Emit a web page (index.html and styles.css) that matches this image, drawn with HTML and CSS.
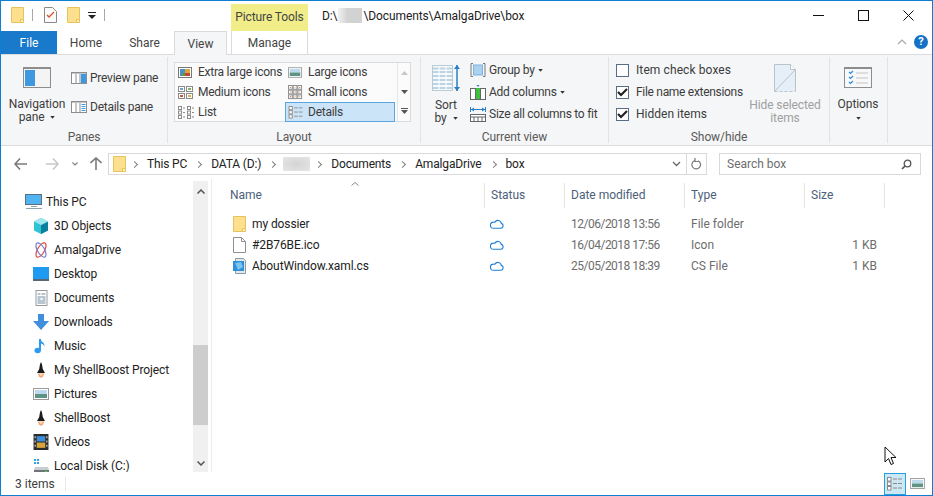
FILE: index.html
```html
<!DOCTYPE html>
<html lang="en">
<head>
  <meta charset="UTF-8">
  <title>box</title>
  <link rel="stylesheet" href="styles.css">
</head>
<body>
  <svg class="defs" width="0" height="0">
    <symbol id="folder" viewBox="0 0 13 16"><path d="M.5.5h12v15H.5z" fill="#fce08e" stroke="#e8c25c"/><path d="M9.500 15.500v-3h3v3z" fill="#fff0bd" stroke="#e8c25c"/></symbol>
    <symbol id="rocket" viewBox="0 0 14 18"><path d="M7 0C5.500 3 5.500 5 5 8L2.500 12.500h9L9 8C8.500 5 8.500 3 7 0z" fill="#1c1c1c"/><path d="M3.500 13h7l-1 3L7 18l-2.500-2z" fill="#f4a878"/><path d="M5.500 13h3l-.5 2.500H6z" fill="#f8d9b8"/></symbol>
    <symbol id="cloud" viewBox="0 0 14 10"><path d="M3.500 9.300h7.200a2.500 2.500 0 0 0 .6-4.900 3.400 3.400 0 0 0-6.400-1.200 2.500 2.500 0 0 0-1.400-.1A3.100 3.100 0 0 0 3.500 9.300z" fill="none" stroke="#1e7fd6" stroke-width="1.100"/></symbol>
    <symbol id="caret" viewBox="0 0 6 4"><path d="M0 0h6L3 3.500z" fill="#333"/></symbol>
    <symbol id="sky" viewBox="0 0 16 12"><rect x=".5" y=".5" width="15" height="11" fill="#fff" stroke="#9a9a9a"/><rect x="2" y="2" width="12" height="4" fill="#bcd9ee"/><rect x="2" y="6" width="12" height="4" fill="#5f9384"/></symbol>
    <symbol id="grid" viewBox="0 0 16 16"><g fill="#fff" stroke="#8a8a8a"><rect x=".5" y=".5" width="4" height="4"/><rect x="5.500" y=".5" width="4" height="4"/><rect x="10.500" y=".5" width="4" height="4"/><rect x=".5" y="5.500" width="4" height="4"/><rect x="5.500" y="5.500" width="4" height="4"/><rect x="10.500" y="5.500" width="4" height="4"/><rect x=".5" y="10.500" width="4" height="4"/><rect x="5.500" y="10.500" width="4" height="4"/><rect x="10.500" y="10.500" width="4" height="4"/></g><path d="M2 2h1v1H2zM12 2h1v1h-1zM7 7h1v1H7zM2 12h1v1H2z" fill="#c0392b"/><path d="M7 2h1v1H7zM12 7h1v1h-1zM2 7h1v1H2zM7 12h1v1H7zM12 12h1v1h-1z" fill="#c89a28"/></symbol>
    <symbol id="details" viewBox="0 0 16 14"><g fill="#fff" stroke="#8a8a8a"><rect x=".5" y=".5" width="3.500" height="3.500"/><rect x=".5" y="5" width="3.500" height="3.500"/><rect x=".5" y="9.500" width="3.500" height="3.500"/></g><path d="M6 2h4M11 2h4M6 6.500h4M11 6.500h4M6 11h4M11 11h4" stroke="#8a8a8a"/></symbol>
  </svg>

  <div class="window">
    <div class="titlebar">
      <div class="qat">
        <svg class="qat-folder" width="13" height="16"><use href="#folder"/></svg>
        <span class="qat-sep"></span>
        <svg class="qat-doc" width="13" height="16" viewBox="0 0 13 16"><path d="M.5.5h8l4 4v11H.5z" fill="#fafafa" stroke="#8a8a8a"/><path d="M3 8l2 2 5-5" fill="none" stroke="#d9532c" stroke-width="1.300"/></svg>
        <svg class="qat-folder2" width="13" height="16"><use href="#folder"/></svg>
        <svg class="qat-drop" width="8" height="7" viewBox="0 0 8 7"><path d="M0 0h8v1H0z" fill="#222"/><path d="M0 3h8L4 7z" fill="#222"/></svg>
        <span class="qat-sep last"></span>
      </div>
      <div class="context-head">Picture Tools</div>
      <div class="title-path">D:\<span class="blur-title"></span>\Documents\AmalgaDrive\box</div>
      <div class="win-buttons">
        <svg width="11" height="11" viewBox="0 0 11 11"><path d="M0 5.500h11" stroke="#111"/></svg>
        <svg width="11" height="11" viewBox="0 0 11 11"><rect x=".5" y=".5" width="10" height="10" fill="none" stroke="#111"/></svg>
        <svg width="11" height="11" viewBox="0 0 11 11"><path d="M.5.5l10 10M10.500.5l-10 10" stroke="#111" fill="none"/></svg>
      </div>
    </div>

    <div class="tabs">
      <div class="tab file">File</div>
      <div class="tab home">Home</div>
      <div class="tab share">Share</div>
      <div class="tab active">View</div>
      <div class="tab manage">Manage</div>
      <svg class="collapse" width="10" height="6" viewBox="0 0 10 6"><path d="M1 5l4-4 4 4" fill="none" stroke="#a8a8a8" stroke-width="1.200"/></svg>
      <div class="help">?</div>
    </div>

    <div class="ribbon">
      <section class="group panes">
        <div class="group-body">
          <div class="big-btn nav-btn">
            <svg class="big-icon" width="28" height="21" viewBox="0 0 28 21"><rect x=".5" y=".5" width="27" height="20" fill="#f4f4f4" stroke="#8d8d8d"/><rect x="0" y="0" width="28" height="2" fill="#8d8d8d"/><rect x="2" y="3" width="10" height="16" fill="#3d98e0"/></svg>
            <span>Navigation</span>
            <span>pane <svg class="caret" width="5" height="3"><use href="#caret"/></svg></span>
          </div>
          <div class="pane-list">
            <div class="pane-item">
              <svg width="16" height="12" viewBox="0 0 16 12"><rect x=".5" y=".5" width="15" height="11" fill="#fff" stroke="#8d8d8d"/><path d="M.5 1h15" stroke="#8d8d8d"/><path d="M5 2v9M9 2v9" stroke="#8d8d8d"/><rect x="10" y="2" width="5" height="9" fill="#3d98e0"/></svg>
              Preview pane
            </div>
            <div class="pane-item">
              <svg width="16" height="12" viewBox="0 0 16 12"><rect x=".5" y=".5" width="15" height="11" fill="#fff" stroke="#8d8d8d"/><path d="M.5 1h15" stroke="#8d8d8d"/><path d="M5 2v9M9 2v9" stroke="#8d8d8d"/><path d="M10.500 3.500h4M10.500 5.500h4M10.500 7.500h4M10.500 9.500h4" stroke="#3d98e0"/></svg>
              Details pane
            </div>
          </div>
        </div>
        <div class="group-label">Panes</div>
      </section>

      <section class="group layout">
        <div class="group-body">
          <div class="gallery">
            <div class="gallery-items">
              <div class="gallery-item"><svg width="14" height="11" viewBox="0 0 14 11"><rect x=".5" y=".5" width="13" height="10" fill="#fff" stroke="#777"/><rect x="2" y="2" width="5" height="7" fill="#4f8fc7"/><rect x="7" y="2" width="5" height="4" fill="#d8a93a"/><rect x="7" y="6" width="5" height="3" fill="#c8452f"/><rect x="4" y="6" width="3" height="3" fill="#5c9a52"/></svg>Extra large icons</div>
              <div class="gallery-item"><svg width="14" height="11"><use href="#sky"/></svg>Large icons</div>
              <div class="gallery-item"><svg width="15" height="13" viewBox="0 0 15 13"><g fill="#fff" stroke="#8a8a8a"><rect x=".5" y=".5" width="6" height="5"/><rect x="8.500" y=".5" width="6" height="5"/><rect x=".5" y="7.500" width="6" height="5"/><rect x="8.500" y="7.500" width="6" height="5"/></g><path d="M2 2h3v2H2z" fill="#6aa5c9"/><path d="M10 2h3v2h-3z" fill="#8aae6a"/><path d="M2 9h3v2H2z" fill="#d2553b"/><path d="M10 9h3v2h-3z" fill="#e0b13c"/></svg>Medium icons</div>
              <div class="gallery-item"><svg width="15" height="15"><use href="#grid"/></svg>Small icons</div>
              <div class="gallery-item"><svg width="16" height="13" viewBox="0 0 16 13"><g fill="#fff" stroke="#8a8a8a"><rect x=".5" y=".5" width="3" height="3"/><rect x=".5" y="5" width="3" height="3"/><rect x=".5" y="9.500" width="3" height="3"/><rect x="9.500" y=".5" width="3" height="3"/><rect x="9.500" y="5" width="3" height="3"/><rect x="9.500" y="9.500" width="3" height="3"/></g><path d="M5 2h2M5 6.500h2M5 11h2M14 2h2M14 6.500h2M14 11h2" stroke="#8a8a8a"/></svg>List</div>
              <div class="gallery-item selected"><svg width="16" height="13"><use href="#details"/></svg>Details</div>
            </div>
            <div class="gallery-scroll">
              <span><svg width="7" height="4" viewBox="0 0 7 4"><path d="M3.500 0L7 4H0z" fill="#c6c6c6"/></svg></span>
              <span><svg width="7" height="4" viewBox="0 0 7 4"><path d="M0 0h7L3.500 4z" fill="#555"/></svg></span>
              <span><svg width="7" height="6" viewBox="0 0 7 6"><path d="M0 0h7v1H0z" fill="#555"/><path d="M0 2h7L3.500 6z" fill="#555"/></svg></span>
            </div>
          </div>
        </div>
        <div class="group-label">Layout</div>
      </section>

      <section class="group current">
        <div class="group-body">
          <div class="big-btn sort-btn">
            <svg class="big-icon sort-icon" width="28" height="28" viewBox="0 0 28 28"><rect x=".5" y="1.500" width="20" height="25" fill="#f6f9fb" stroke="#b7cbd6"/><path d="M1 4.500h19M1 8h19M1 12h19M1 16h19M1 20h19M1 24h19" stroke="#bcd3e2" stroke-width="2"/><path d="M7 2v24M14 2v24" stroke="#fff"/><path d="M25 1v26" stroke="#2a7fc4" stroke-width="1.500"/><path d="M22 5l3-4 3 4zM22 23l3 4 3-4z" fill="#2a7fc4"/></svg>
            <span>Sort</span>
            <span>by <svg class="caret" width="5" height="3"><use href="#caret"/></svg></span>
          </div>
          <div class="view-list">
            <div class="view-item"><svg width="16" height="14" viewBox="0 0 15 14"><path d="M2.500.5h-2v13h2M12.500.5h2v13h-2" fill="none" stroke="#777"/><rect x="3" y="2" width="9" height="10" fill="#a9d1f2" stroke="#7fb2dc"/></svg>Group by <svg class="caret" width="5" height="3"><use href="#caret"/></svg></div>
            <div class="view-item"><svg width="16" height="15" viewBox="0 0 16 15"><rect x=".5" y="3.500" width="15" height="11" fill="#fff" stroke="#666"/><path d="M5.500 4v10M10.500 4v10" stroke="#666"/><rect x="6" y="3" width="4" height="11" fill="#3fc13f"/><path d="M6.500 0h3L8 2z" fill="#2a7fc4"/></svg>Add columns <svg class="caret" width="5" height="3"><use href="#caret"/></svg></div>
            <div class="view-item"><svg width="16" height="15" viewBox="0 0 16 15"><path d="M.5 0v5M15.500 0v5" stroke="#2a7fc4"/><path d="M1 2.500h14" stroke="#2a7fc4"/><path d="M1 2.500l3-2v4zM15 2.500l-3-2v4z" fill="#2a7fc4"/><rect x=".5" y="7.500" width="15" height="7" fill="#fff" stroke="#666"/><path d="M.5 10h15M4 10v5M8 10v5M12 10v5" stroke="#666"/></svg>Size all columns to fit</div>
          </div>
        </div>
        <div class="group-label">Current view</div>
      </section>

      <section class="group showhide">
        <div class="group-body">
          <div class="check-list">
            <div class="check-item wide"><span class="box"></span>Item check boxes</div>
            <div class="check-item tight"><span class="box"><svg width="11" height="9" viewBox="0 0 11 9"><path d="M1 4l3 3 6-6" fill="none" stroke="#222" stroke-width="2.200"/></svg></span>File name extensions</div>
            <div class="check-item"><span class="box"><svg width="11" height="9" viewBox="0 0 11 9"><path d="M1 4l3 3 6-6" fill="none" stroke="#222" stroke-width="2.200"/></svg></span>Hidden items</div>
          </div>
          <div class="big-btn hide-btn">
            <svg class="big-icon hide-icon" width="22" height="28" viewBox="0 0 22 28"><path d="M.5.500h16l5 5v22H.5z" fill="#e6eef8"/><path d="M.5 27.500V.5h16l5 5v22" fill="none" stroke="#b9c3cc"/><path d="M.5 27.500h21" stroke="#b9c3cc" stroke-dasharray="3 2"/><path d="M1 27L21 6" stroke="#b9c3cc"/><path d="M16.500.5v5h5" fill="#fff" stroke="#b9c3cc"/></svg>
            <span>Hide selected</span>
            <span>items</span>
          </div>
        </div>
        <div class="group-label">Show/hide</div>
      </section>

      <section class="group options">
        <div class="group-body">
          <div class="big-btn opt-btn">
            <svg class="big-icon" width="28" height="21" viewBox="0 0 28 21"><rect x=".5" y=".5" width="27" height="20" fill="#f8f8f8" stroke="#8d8d8d"/><rect x="0" y="0" width="28" height="2" fill="#8d8d8d"/><path d="M5 5l1.500 1.500L9 4M5 10l1.500 1.500L9 9M5 15l1.500 1.500L9 14" fill="none" stroke="#2a8fe0" stroke-width="1.200"/><path d="M12 6h12M12 11h12M12 16h12" stroke="#c4c4c4"/></svg>
            <span>Options</span>
            <svg class="caret opt-caret" width="5" height="3"><use href="#caret"/></svg>
          </div>
        </div>
      </section>
    </div>

    <div class="navbar">
      <svg class="nav-arrow back" width="14" height="12" viewBox="0 0 14 12"><path d="M6 .5L1 6l5 5.500M1 6h12" fill="none" stroke="#7a7a7a" stroke-width="1.600"/></svg>
      <svg class="nav-arrow fwd" width="14" height="12" viewBox="0 0 14 12"><path d="M8 .5L13 6l-5 5.500M13 6H1" fill="none" stroke="#c8c8c8" stroke-width="1.600"/></svg>
      <svg class="nav-arrow recent" width="6" height="4" viewBox="0 0 6 4"><path d="M.5.5L3 3 5.500.5" fill="none" stroke="#808080" stroke-width="1.100"/></svg>
      <svg class="nav-arrow up" width="12" height="14" viewBox="0 0 12 14"><path d="M.5 6L6 1l5.500 5M6 1v12" fill="none" stroke="#7a7a7a" stroke-width="1.600"/></svg>
      <div class="address">
        <svg class="addr-folder" width="13" height="16"><use href="#folder"/></svg>
        <span class="crumb">This PC</span>
        <span class="crumb">DATA (D:)</span>
        <span class="crumb"><span class="blur-crumb"></span></span>
        <span class="crumb">Documents</span>
        <span class="crumb">AmalgaDrive</span>
        <span class="crumb">box</span>
        <svg class="addr-drop" width="9" height="6" viewBox="0 0 9 6"><path d="M1 1l3.500 3.500L8 1" fill="none" stroke="#666" stroke-width="1.300"/></svg>
        <span class="addr-refresh"><svg width="11" height="13" viewBox="0 0 11 13"><path d="M4 2.500a4.300 4.300 0 1 0 3 .2M4 0v3.500h3" fill="none" stroke="#777" stroke-width="1.200"/></svg></span>
      </div>
      <div class="search">
        <span>Search box</span>
        <svg width="11" height="11" viewBox="0 0 11 11"><circle cx="6.500" cy="4.500" r="3.300" fill="none" stroke="#555" stroke-width="1.300"/><path d="M4 7L1 10" stroke="#555" stroke-width="1.700"/></svg>
      </div>
    </div>

    <div class="content">
      <div class="tree-pane">
        <div class="tree">
          <div class="tree-row root"><svg width="18" height="16" viewBox="0 0 18 16"><rect x=".5" y=".5" width="16" height="10" fill="#4fb4f0" stroke="#5d6f7c"/><path d="M6 12h6v1H6zM1 14h16v1H1z" fill="#8fa2ae"/></svg>This PC</div>
          <div class="tree-row"><svg width="16" height="16" viewBox="0 0 16 16"><path d="M8 0l7 3.500v9L8 16l-7-3.500v-9z" fill="#2fc3d3"/><path d="M8 7l7-3.500v9L8 16z" fill="#0b7f9e"/><path d="M8 0l7 3.500L8 7 1 3.500z" fill="#9fe6ee"/></svg>3D Objects</div>
          <div class="tree-row"><svg width="16" height="16" viewBox="0 0 16 16"><ellipse cx="8" cy="8" rx="3.500" ry="8" transform="rotate(30 8 8)" fill="none" stroke="#e0463c" stroke-width="1.200"/><ellipse cx="8" cy="8" rx="3.500" ry="8" transform="rotate(-30 8 8)" fill="none" stroke="#6f7fd0" stroke-width="1.200"/></svg>AmalgaDrive</div>
          <div class="tree-row"><svg width="16" height="16" viewBox="0 0 16 16"><rect x="0" y="1" width="16" height="12" fill="#1e9af0"/><rect x="0" y="13" width="16" height="2" fill="#5a6670"/></svg>Desktop</div>
          <div class="tree-row"><svg width="13" height="16" viewBox="0 0 13 16"><rect x="1.500" y=".5" width="11" height="15" fill="#fff" stroke="#9a9a9a"/><path d="M3 4h3M7 4h4M3 7h8M3 9h3M8 9h3M3 11h8M3 13h8" stroke="#6f8ca5"/></svg>Documents</div>
          <div class="tree-row"><svg width="16" height="16" viewBox="0 0 16 16"><path d="M5 0h6v7h5l-8 9-8-9h5z" fill="#3f8fdc"/></svg>Downloads</div>
          <div class="tree-row"><svg width="16" height="16" viewBox="0 0 16 16"><path d="M7 1v11" stroke="#2d9cf0" stroke-width="2"/><ellipse cx="4.700" cy="12.500" rx="3.200" ry="2.800" fill="#2d9cf0"/><path d="M7 1c1 3 5 3 4.500 8C11 6 9 6 7 5z" fill="#2d9cf0"/></svg>Music</div>
          <div class="tree-row"><svg width="14" height="18"><use href="#rocket"/></svg>My ShellBoost Project</div>
          <div class="tree-row"><svg width="16" height="12"><use href="#sky"/></svg>Pictures</div>
          <div class="tree-row"><svg width="14" height="18"><use href="#rocket"/></svg>ShellBoost</div>
          <div class="tree-row"><svg width="14" height="15" viewBox="0 0 14 15"><rect width="14" height="15" fill="#2b2b2b"/><path d="M3 2h8v5H3z" fill="#3d8dd8"/><path d="M3 8h8v5H3z" fill="#d8a53d"/><path d="M1 2h1v2H1zM1 6h1v2H1zM1 10h1v2H1zM12 2h1v2h-1zM12 6h1v2h-1zM12 10h1v2h-1z" fill="#ddd"/></svg>Videos</div>
          <div class="tree-row"><svg width="16" height="16" viewBox="0 0 16 16"><path d="M1 1h2v2H1zM4 1h2v2H4zM1 4h2v2H1zM4 4h2v2H4z" fill="#2fa3e8"/><path d="M2 9h13l1 3H1z" fill="#c5ced3"/><rect x="1" y="12" width="15" height="4" fill="#6e7478"/><rect x="12" y="13" width="2" height="1" fill="#4fd34f"/></svg>Local Disk (C:)</div>
        </div>
        <div class="scrollbar">
          <svg class="sb-arrow" width="8" height="5" viewBox="0 0 8 5"><path d="M.5 4.500L4 1l3.500 3.500" fill="none" stroke="#555" stroke-width="1.500"/></svg>
          <div class="sb-thumb"></div>
          <svg class="sb-arrow bottom" width="8" height="5" viewBox="0 0 8 5"><path d="M.5.5L4 4 7.500.5" fill="none" stroke="#555" stroke-width="1.500"/></svg>
        </div>
      </div>

      <div class="files">
        <div class="file-grid head">
          <div class="col-head name">Name<svg class="sort-arrow" width="8" height="4" viewBox="0 0 8 4"><path d="M.5 3.500L4 .5l3.500 3" fill="none" stroke="#888"/></svg></div>
          <div class="col-head">Status</div>
          <div class="col-head">Date modified</div>
          <div class="col-head">Type</div>
          <div class="col-head">Size</div>
        </div>
        <div class="file-grid row">
          <div class="fname"><svg width="13" height="16"><use href="#folder"/></svg>my dossier</div>
          <div class="status"><svg width="14" height="10"><use href="#cloud"/></svg></div>
          <div class="meta date">12/06/2018 13:56</div>
          <div class="meta">File folder</div>
          <div class="meta size"></div>
        </div>
        <div class="file-grid row">
          <div class="fname"><svg width="13" height="16" viewBox="0 0 13 16"><path d="M.5.5h8l4 4v11H.5z" fill="#fff" stroke="#8f8f8f"/><path d="M8.500.5v4h4" fill="none" stroke="#8f8f8f"/></svg>#2B76BE.ico</div>
          <div class="status"><svg width="14" height="10"><use href="#cloud"/></svg></div>
          <div class="meta date">16/04/2018 17:56</div>
          <div class="meta">Icon</div>
          <div class="meta size">1 KB</div>
        </div>
        <div class="file-grid row">
          <div class="fname"><svg width="13" height="16" viewBox="0 0 13 16"><path d="M2.500.5h8l2 2v13h-10z" fill="#dfe8ef" stroke="#8f9aa3"/><rect x="0" y="3" width="11" height="10" fill="#2f8fd8"/><path d="M2 5l6-1 2 5-5 3z" fill="#7cc4ee"/></svg>AboutWindow.xaml.cs</div>
          <div class="status"><svg width="14" height="10"><use href="#cloud"/></svg></div>
          <div class="meta date">25/05/2018 18:39</div>
          <div class="meta">CS File</div>
          <div class="meta size">1 KB</div>
        </div>
      </div>

      <svg class="cursor" width="13" height="20" viewBox="0 0 13 20"><path d="M1 1v15l3.500-3.500 2.500 6 2.500-1-2.500-6h5z" fill="#fff" stroke="#111"/></svg>
    </div>

    <div class="statusbar">
      <span class="count">3 items</span>
      <span class="status-sep"></span>
      <div class="view-toggle">
        <span class="toggle on"><svg width="16" height="14"><use href="#details"/></svg></span>
        <span class="toggle big"><svg width="15" height="11"><use href="#sky"/></svg></span>
      </div>
    </div>
  </div>
</body>
</html>
```

FILE: styles.css
```css
* {
  box-sizing: border-box;
}
html, body {
  margin: 0;
  height: 100%;
  overflow: hidden;
}
body {
  font-family: 'Roboto', 'Noto Sans', sans-serif;
  font-size: 12px;
  color: #222;
  background: #fff;
}
svg {
  display: block;
  flex: none;
}
.defs {
  position: absolute;
}
.window {
  width: 933px;
  height: 496px;
  border: 1px solid #0f7fd4;
  display: flex;
  flex-direction: column;
  background: #fff;
  position: relative;
}

/* title bar */
.titlebar {
  height: 30px;
  display: flex;
  flex: none;
}
.qat {
  width: 230px;
  display: flex;
  align-items: center;
  padding-left: 10px;
  padding-bottom: 2px;
}
.qat-sep {
  width: 1px;
  height: 12px;
  background: #a8a8a8;
  margin-left: 8px;
}
.qat-doc {
  margin-left: 11px;
}
.qat-folder2 {
  margin-left: 10px;
}
.qat-drop {
  margin-left: 8px;
}
.qat-sep.last {
  margin-left: 8px;
}
.context-head {
  width: 77px;
  margin-top: 3px;
  background: #f1ee8a;
  text-align: center;
  line-height: 27px;
  color: #444;
  letter-spacing: -0.1px;
}
.title-path {
  margin-left: 14px;
  line-height: 30px;
  color: #222;
  letter-spacing: -0.1px;
}
.blur-title {
  display: inline-block;
  width: 24px;
  height: 15px;
  margin: 0 1px;
  vertical-align: -3px;
  background: linear-gradient(90deg, #f2f2f2, #d2d2d2 40%, #d2d2d2);
}
.win-buttons {
  margin-left: auto;
  width: 119px;
  display: flex;
  gap: 34px;
  padding-top: 9px;
}

/* tabs */
.tabs {
  height: 24px;
  flex: none;
  display: flex;
  align-items: stretch;
  margin-bottom: -1px;
  position: relative;
  z-index: 1;
}
.tab {
  line-height: 24px;
  text-align: center;
  color: #444;
}
.tab.file {
  width: 56px;
  height: 23px;
  background: #1979ca;
  color: #fff;
}
.tab.home {
  width: 58px;
}
.tab.share {
  width: 59px;
}
.tab.active {
  width: 53px;
  background: #f5f6f7;
  border: 1px solid #dadbdc;
  border-bottom: 0;
}
.tab.manage {
  width: 77px;
  margin-left: 4px;
  height: 23px;
  border-left: 1px solid #dadbdc;
  border-right: 1px solid #dadbdc;
}
.collapse {
  margin-left: auto;
  align-self: center;
  margin-top: -2px;
}
.help {
  width: 14px;
  height: 14px;
  border-radius: 50%;
  background: #1472c4;
  color: #fff;
  font-weight: bold;
  font-size: 11px;
  line-height: 14px;
  text-align: center;
  align-self: center;
  margin: -2px 4px 0 7px;
}

/* ribbon */
.ribbon {
  height: 92px;
  background: #f5f6f7;
  border-top: 1px solid #dadbdc;
  border-bottom: 1px solid #dadbdc;
  display: flex;
  padding-top: 2px;
  flex: none;
}
.group {
  height: 86px;
  border-right: 1px solid #e1e3e6;
  display: flex;
  flex-direction: column;
}
.group-body {
  flex: 1;
  display: flex;
  min-height: 0;
}
.group-label {
  text-align: center;
  color: #5a5a5a;
  line-height: 12px;
  letter-spacing: -0.1px;
}
.panes {
  width: 167px;
}
.layout {
  width: 253px;
}
.current {
  width: 188px;
}
.showhide {
  width: 221px;
}
.options {
  width: 58px;
}
.big-btn {
  display: flex;
  flex-direction: column;
  align-items: center;
  line-height: 13px;
  color: #3c3c3c;
  white-space: nowrap;
  letter-spacing: -0.1px;
}
.big-btn span {
  display: flex;
  align-items: center;
  gap: 3px;
  white-space: pre;
}
.big-icon {
  margin-bottom: 10px;
}
.caret {
  display: inline-block;
}
.nav-btn {
  width: 64px;
  margin-left: 4px;
  padding-top: 10px;
}
.pane-list {
  margin-left: 2px;
  padding-top: 13px;
  display: flex;
  flex-direction: column;
  gap: 13px;
}
.pane-item {
  display: flex;
  align-items: center;
  gap: 3px;
  height: 16px;
  color: #3c3c3c;
  letter-spacing: -0.25px;
}
.gallery {
  margin: 5px 0 0 6px;
  width: 237px;
  height: 60px;
  border: 1px solid #dadbdc;
  background: #fbfbfc;
  display: flex;
}
.gallery-items {
  width: 222px;
  margin-top: -1px;
  display: grid;
  grid-template-columns: 110px 110px;
  grid-auto-rows: 20px;
}
.gallery-item {
  display: grid;
  grid-template-columns: 20px 1fr;
  align-items: center;
  padding-left: 3px;
  white-space: nowrap;
  color: #3c3c3c;
  letter-spacing: -0.25px;
}
.gallery-item.selected {
  background: #cce4f8;
  box-shadow: inset 0 0 0 1px #5aa7e0;
}
.gallery-scroll {
  flex: 1;
  display: flex;
  flex-direction: column;
  border-left: 1px solid #e4e5e7;
}
.gallery-scroll span {
  flex: 1;
  display: flex;
  align-items: center;
  justify-content: center;
}
.sort-btn {
  width: 40px;
  margin-left: 5px;
  padding-top: 7px;
}
.sort-icon {
  margin-bottom: 7px;
}
.view-list {
  margin-left: 4px;
  padding-top: 5px;
  display: flex;
  flex-direction: column;
  gap: 6px;
}
.view-item {
  height: 16px;
  display: flex;
  align-items: center;
  gap: 3px;
  white-space: nowrap;
  color: #3c3c3c;
  letter-spacing: -0.25px;
}
.check-list {
  padding: 6px 0 0 7px;
  width: 146px;
  display: flex;
  flex-direction: column;
  gap: 8px;
}
.check-item {
  display: flex;
  align-items: center;
  height: 14px;
  gap: 7px;
  white-space: nowrap;
  color: #3c3c3c;
}
.check-item.wide {
  letter-spacing: 0.1px;
}
.check-item.tight {
  letter-spacing: -0.3px;
}
.box {
  width: 13px;
  height: 13px;
  border: 1px solid #5a6b85;
  background: #fff;
  display: flex;
  align-items: center;
  justify-content: center;
}
.hide-btn {
  width: 60px;
  padding-top: 7px;
  color: #a0a0a0;
}
.hide-icon {
  margin-bottom: 7px;
}
.opt-btn {
  width: 56px;
  padding-top: 10px;
}
.opt-caret {
  margin-top: 6px;
}

/* address row */
.navbar {
  height: 33px;
  flex: none;
  display: flex;
  align-items: center;
  padding-top: 3px;
}
.back {
  margin-left: 13px;
}
.fwd {
  margin-left: 17px;
}
.recent {
  margin-left: 13px;
}
.up {
  margin-left: 12px;
}
.address {
  width: 599px;
  height: 22px;
  margin-left: 6px;
  border: 1px solid #d9d9d9;
  display: flex;
  align-items: center;
  padding-left: 4px;
}
.addr-folder {
  margin-right: -3px;
}
.crumb {
  color: #222;
  display: flex;
  align-items: center;
  letter-spacing: -0.15px;
}
.crumb::before {
  content: "";
  width: 4px;
  height: 4px;
  border-top: 1.500px solid #808080;
  border-right: 1.500px solid #808080;
  transform: rotate(45deg);
  margin: 0 10px 0 9px;
}
.blur-crumb {
  width: 27px;
  height: 14px;
  margin: 0 -3px 0 -2px;
  background: radial-gradient(ellipse at center, #d4d4d4, #e6e6e6);
}
.addr-drop {
  margin-left: auto;
  margin-right: 5px;
}
.addr-refresh {
  width: 20px;
  height: 100%;
  border-left: 1px solid #d9d9d9;
  display: flex;
  align-items: center;
  justify-content: center;
}
.search {
  width: 202px;
  height: 22px;
  margin-left: 12px;
  border: 1px solid #d9d9d9;
  display: flex;
  align-items: center;
  justify-content: space-between;
  padding: 0 8px 0 7px;
  color: #6d6d6d;
}

/* content */
.content {
  flex: 1;
  min-height: 0;
  display: flex;
  position: relative;
}
.tree-pane {
  width: 211px;
  display: flex;
  border-right: 1px solid #ececec;
}
.tree {
  flex: 1;
  padding-top: 11px;
  overflow: hidden;
  min-width: 0;
}
.tree-row {
  height: 24px;
  display: flex;
  align-items: center;
  padding-left: 32px;
  gap: 5px;
  white-space: nowrap;
  letter-spacing: -0.1px;
}
.tree-row svg {
  width: 16px;
  height: 16px;
}
.tree-row.root {
  padding-left: 24px;
  gap: 3px;
}
.tree-row.root svg {
  width: 18px;
}
.scrollbar {
  width: 15px;
  margin: 2px 3px 0 0;
  background: #f0f0f0;
  display: flex;
  flex-direction: column;
  align-items: center;
  padding-top: 8px;
}
.sb-thumb {
  align-self: stretch;
  height: 80px;
  margin-top: 151px;
  background: #cdcdcd;
}
.sb-arrow.bottom {
  margin-top: auto;
  margin-bottom: 6px;
}
.files {
  flex: 1;
  padding: 4px 0 0 11px;
}
.file-grid {
  display: grid;
  grid-template-columns: 262px 80px 120px 120px 80px;
}
.file-grid.head {
  height: 25px;
  margin-bottom: 5px;
}
.col-head {
  padding-left: 6px;
  line-height: 25px;
  color: #4c607a;
  border-right: 1px solid #e5e5e5;
  position: relative;
}
.col-head.name {
  padding-left: 7px;
}
.sort-arrow {
  position: absolute;
  left: 128px;
  top: -1px;
}
.row {
  height: 21px;
  align-items: center;
}
.fname {
  display: flex;
  align-items: center;
  gap: 6px;
  padding-left: 10px;
  color: #222;
  letter-spacing: -0.1px;
}
.status {
  padding-left: 5px;
}
.meta {
  padding-left: 6px;
  color: #6d6d6d;
}
.meta.date {
  letter-spacing: -0.5px;
}
.meta.size {
  text-align: right;
  padding-right: 8px;
}
.cursor {
  position: absolute;
  left: 883px;
  top: 267px;
}

/* status bar */
.statusbar {
  height: 23px;
  flex: none;
  display: flex;
  align-items: center;
  padding-left: 14px;
  color: #3c3c3c;
}
.status-sep {
  width: 1px;
  height: 14px;
  background: #e8e8e8;
  margin-left: 10px;
}
.view-toggle {
  margin-left: auto;
  display: flex;
  height: 22px;
  margin-right: 7px;
  gap: 4px;
}
.toggle {
  height: 22px;
  display: flex;
  align-items: center;
  justify-content: center;
}
.toggle.on {
  width: 22px;
  background: #cce8f5;
  border: 1px solid #26a0da;
}
.toggle.big {
  width: 15px;
}
```
